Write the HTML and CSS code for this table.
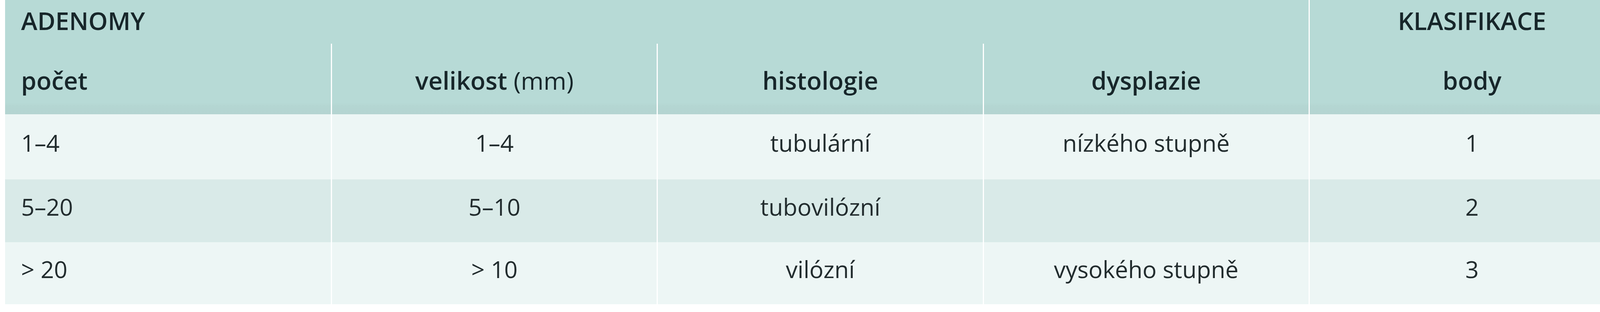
FILE: index.html
```html
<!DOCTYPE html>
<html lang="cs">
<head>
<meta charset="utf-8">
<title>Adenomy – klasifikace</title>
<link rel="stylesheet" href="styles.css">
</head>
<body>
<div class="grid" role="table">
  <div class="cell head group left">ADENOMY</div>
  <div class="cell head sep">KLASIFIKACE</div>

  <div class="cell head sub left">počet</div>
  <div class="cell head sub sep">velikost&nbsp;<span class="unit">(mm)</span></div>
  <div class="cell head sub sep">histologie</div>
  <div class="cell head sub sep">dysplazie</div>
  <div class="cell head sub sep">body</div>

  <div class="cell odd left">1–4</div>
  <div class="cell odd sep">1–4</div>
  <div class="cell odd sep">tubulární</div>
  <div class="cell odd sep">nízkého stupně</div>
  <div class="cell odd sep">1</div>

  <div class="cell even left">5–20</div>
  <div class="cell even sep">5–10</div>
  <div class="cell even sep">tubovilózní</div>
  <div class="cell even sep"></div>
  <div class="cell even sep">2</div>

  <div class="cell odd left">&gt; 20</div>
  <div class="cell odd sep">&gt; 10</div>
  <div class="cell odd sep">vilózní</div>
  <div class="cell odd sep">vysokého stupně</div>
  <div class="cell odd sep">3</div>
</div>
</body>
</html>
```
FILE: styles.css
```css
html, body {
  margin: 0;
  padding: 0;
  background: #ffffff;
}

body {
  padding: 0 14px 0 13px;
  font-family: "Open Sans", "Noto Sans", sans-serif;
  color: #1b2a2a;
}

.grid {
  width: 4171px;
  display: grid;
  grid-template-columns: repeat(5, 1fr);
  grid-template-rows: 112px 181px 167px 161px 159px;
}

.cell {
  display: flex;
  align-items: center;
  justify-content: center;
  padding: 0 20px;
  white-space: nowrap;
  box-sizing: border-box;
  min-width: 0;
}

.left {
  justify-content: flex-start;
  padding-left: 41px;
}

.sep {
  border-left: 3px solid #ffffff;
}

.head {
  background: #b7dad6;
  font-size: 63px;
  font-weight: 600;
  color: #17262a;
  padding-bottom: 8px;
}

.group {
  grid-column: span 4;
}

.sub {
  padding-top: 6px;
  padding-bottom: 0;
  background: linear-gradient(to bottom, #b7dad6 0, #b7dad6 152px, #b4d6d2 160px, #b4d4d1 181px);
}

.unit {
  font-weight: 400;
}

.odd,
.even {
  font-size: 60px;
  font-weight: 400;
  color: #222c2e;
  padding-bottom: 22px;
}

.odd {
  background: #edf6f5;
}

.even {
  background: #d9eae8;
}
```
